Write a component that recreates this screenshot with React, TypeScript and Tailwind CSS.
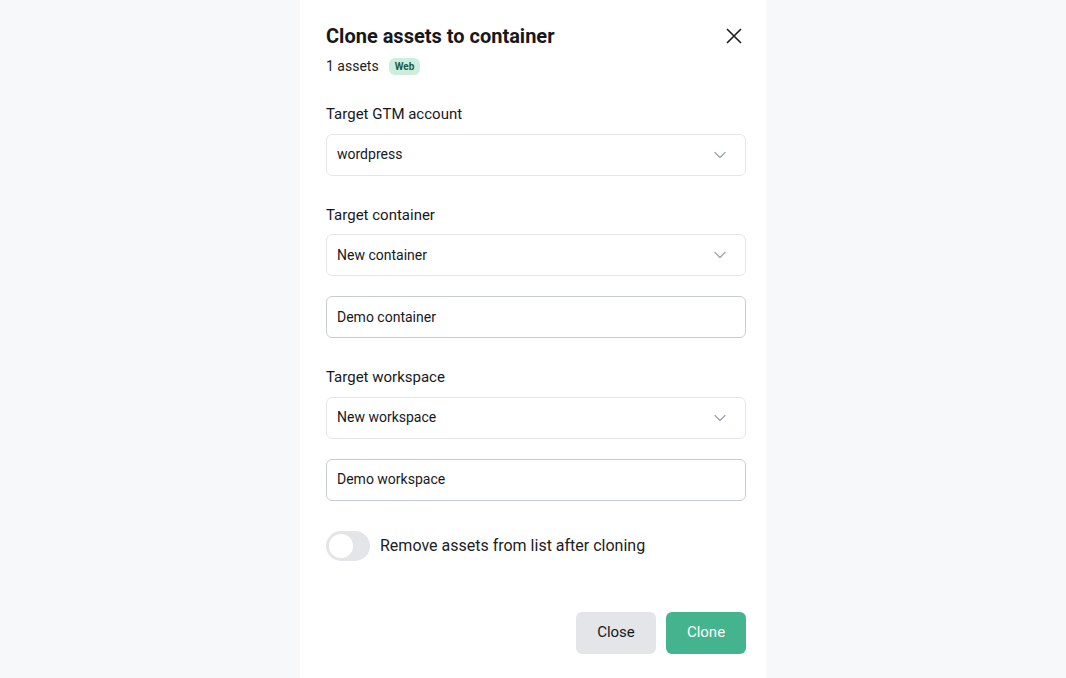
import React from 'react';

const font = { fontFamily: 'Roboto, "Liberation Sans", sans-serif' };

const Chevron = () => (
  <svg width="14" height="14" viewBox="0 0 14 14" fill="none" className="text-gray-400">
    <path d="M2 4.5l5 5 5-5" stroke="currentColor" strokeWidth="1.2" strokeLinecap="round" strokeLinejoin="round" />
  </svg>
);

const Select = ({ value }: { value: string }) => (
  <div className="flex h-[42px] items-center justify-between rounded-md border border-[#e4e6ea] bg-white pl-[10px] pr-[18px]">
    <span className="text-[14px] text-[#16181c]">{value}</span>
    <Chevron />
  </div>
);

const Input = ({ value }: { value: string }) => (
  <div className="flex h-[42px] items-center rounded-md border border-[#c7cbd2] bg-white pl-[10px]">
    <span className="text-[14px] text-[#16181c]">{value}</span>
  </div>
);

const Label = ({ children }: { children: React.ReactNode }) => (
  <div className="mb-[8px] text-[15px] text-[#16181c]">{children}</div>
);

export default function App() {
  return (
    <div className="flex h-[678px] justify-center bg-[#f7f8fa]" style={font}>
      <div className="w-[466px] bg-white pl-[26px] pr-[20px] pt-[24px]">
        <div className="flex items-start justify-between">
          <h1 className="text-[20px] font-bold leading-[24px] text-[#16181c]">Clone assets to container</h1>
          <button className="mr-[4px] mt-[4px] text-[#1b1d21]">
            <svg width="16" height="16" viewBox="0 0 16 16" fill="none">
              <path d="M1 1l14 14M15 1L1 15" stroke="currentColor" strokeWidth="1.6" />
            </svg>
          </button>
        </div>
        <div className="mt-[8px] flex items-center gap-[10px]">
          <span className="text-[14px] text-[#1b1d21]">1 assets</span>
          <span className="rounded-[6px] bg-[#cdeedf] px-[6px] py-[2px] text-[10px] font-bold leading-[13px] text-[#1f5a43]">Web</span>
        </div>

        <div className="mt-[26px]">
          <Label>Target GTM account</Label>
          <Select value="wordpress" />
        </div>

        <div className="mt-[28px]">
          <Label>Target container</Label>
          <Select value="New container" />
          <div className="mt-[20px]">
            <Input value="Demo container" />
          </div>
        </div>

        <div className="mt-[28px]">
          <Label>Target workspace</Label>
          <Select value="New workspace" />
          <div className="mt-[20px]">
            <Input value="Demo workspace" />
          </div>
        </div>

        <div className="mt-[30px] flex items-center gap-[10px]">
          <div className="flex h-[30px] w-[44px] items-center rounded-full bg-[#e3e5e9] pl-[3px]">
            <div className="h-[24px] w-[24px] rounded-full bg-white" />
          </div>
          <span className="text-[16px] text-[#1b1d21]">Remove assets from list after cloning</span>
        </div>

        <div className="mt-[51px] flex justify-end gap-[10px]">
          <button className="h-[42px] w-[80px] rounded-md bg-[#e3e5e9] text-[15px] text-[#16181c]">Close</button>
          <button className="h-[42px] w-[80px] rounded-md bg-[#44b48e] text-[15px] text-white">Clone</button>
        </div>
      </div>
    </div>
  );
}
